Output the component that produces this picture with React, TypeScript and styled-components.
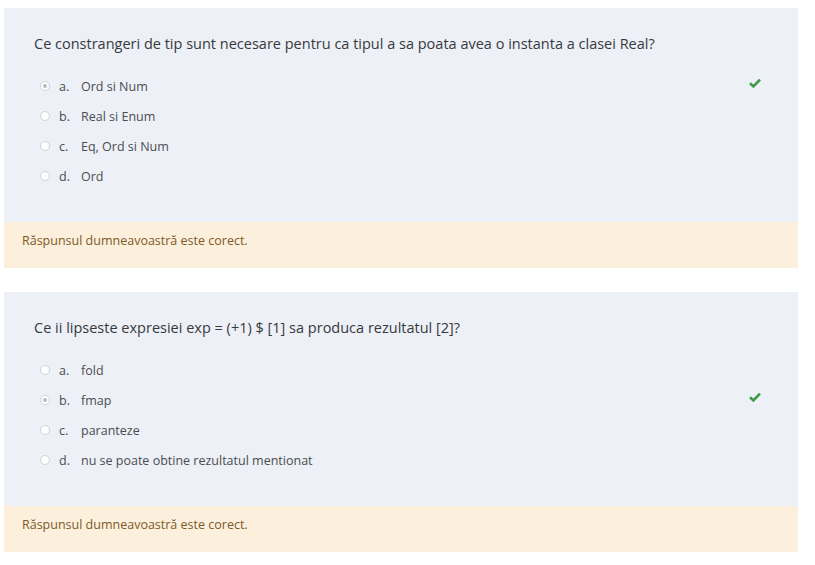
import React from "react";
import styled, { createGlobalStyle } from "styled-components";

const Global = createGlobalStyle`
  html, body { margin: 0; padding: 0; background: #ffffff; }
  body { font-family: "Open Sans", "Noto Sans", sans-serif; }
`;

const Page = styled.div`
  display: flex;
  flex-direction: column;
  gap: 24px;
  padding: 8px 17px 0 4px;
`;

const Card = styled.section`
  background: #edf0f7;
  display: flex;
  flex-direction: column;
  height: 260px;
`;

const Content = styled.div`
  flex: 1;
  padding: 24px 30px 0 30px;
`;

const Question = styled.div`
  font-size: 14.5px;
  line-height: 24px;
  color: #373a3c;
`;

const Options = styled.div`
  margin-top: 15px;
  display: flex;
  flex-direction: column;
`;

const Row = styled.div`
  display: flex;
  align-items: center;
  height: 30px;
  font-size: 12.5px;
  color: #4a4d50;
`;

const Radio = styled.span<{ $checked?: boolean }>`
  width: 8px;
  height: 8px;
  border-radius: 50%;
  border: 1px solid #cfd2d6;
  background: #fff;
  margin-left: 6px;
  margin-right: 9px;
  display: inline-flex;
  align-items: center;
  justify-content: center;
  &::after {
    content: "";
    width: 4px;
    height: 4px;
    border-radius: 50%;
    background: ${(p) => (p.$checked ? "#b9bcc0" : "transparent")};
  }
`;

const Letter = styled.span`
  width: 22px;
`;

const Label = styled.span`
  flex: 1;
`;

const Check = styled.svg`
  width: 12px;
  height: 10px;
  margin-right: 7px;
  margin-bottom: 7px;
`;

const Feedback = styled.div`
  background: #fcefdc;
  height: 46px;
  box-sizing: border-box;
  padding: 10px 18px 0 18px;
  font-size: 12.5px;
  line-height: 18px;
  color: #7d5a29;
`;

type Q = { text: string; options: string[]; selected: number };

const questions: Q[] = [
  {
    text: "Ce constrangeri de tip sunt necesare pentru ca tipul a sa poata avea o instanta a clasei Real?",
    options: ["Ord si Num", "Real si Enum", "Eq, Ord si Num", "Ord"],
    selected: 0,
  },
  {
    text: "Ce ii lipseste expresiei exp = (+1) $ [1] sa produca rezultatul [2]?",
    options: ["fold", "fmap", "paranteze", "nu se poate obtine rezultatul mentionat"],
    selected: 1,
  },
];

const letters = ["a.", "b.", "c.", "d."];

export default function App() {
  return (
    <>
      <Global />
      <Page>
        {questions.map((q, qi) => (
          <Card key={qi}>
            <Content>
              <Question>{q.text}</Question>
              <Options>
                {q.options.map((o, i) => (
                  <Row key={i}>
                    <Radio $checked={i === q.selected} />
                    <Letter>{letters[i]}</Letter>
                    <Label>{o}</Label>
                    {i === q.selected && (
                      <Check viewBox="0 0 12 10">
                        <path d="M1 5.2 L4.4 8.4 L11 1.6" stroke="#3a9a45" strokeWidth="2.6" fill="none" strokeLinejoin="miter" />
                      </Check>
                    )}
                  </Row>
                ))}
              </Options>
            </Content>
            <Feedback>Răspunsul dumneavoastră este corect.</Feedback>
          </Card>
        ))}
      </Page>
    </>
  );
}
